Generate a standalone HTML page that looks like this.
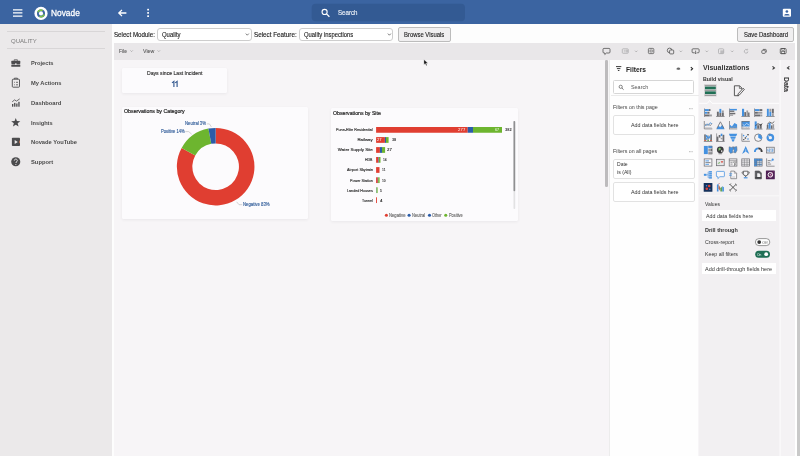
<!DOCTYPE html>
<html><head><meta charset="utf-8">
<style>
*{box-sizing:border-box;margin:0;padding:0}
html,body{width:800px;height:456px;overflow:hidden;background:#f7f5f7;font-family:"Liberation Sans",sans-serif;}
.a{position:absolute}
.t{position:absolute;white-space:nowrap;line-height:1;color:#333}
#hdr{left:0;top:0;width:800px;height:24.8px;background:#3b64a1}
#side{left:0;top:24.3px;width:111.8px;height:432px;background:#ebe9ea}
#sideline{left:111.8px;top:24.3px;width:2px;height:432px;background:#fdfdfd}
#tb1{left:113px;top:24.3px;width:682px;height:18.6px;background:#fdfdfd}
#tb2{left:114px;top:42.8px;width:681px;height:16.8px;background:#e9e7e9}
#canvas{left:113.5px;top:59.6px;width:496px;height:397px;background:#f7f5f7}
#filters{left:609.2px;top:59.6px;width:89.3px;height:397px;background:#fefefe;border-left:1px solid #ececec}
#viz{left:699.2px;top:59.6px;width:80.2px;height:397px;background:#f2f0f2}
#data{left:779.6px;top:59.6px;width:15px;height:397px;background:#f4f2f4;border-left:1px solid #f9f8f9}
#rwhite{left:794.5px;top:24.3px;width:2.5px;height:432px;background:#fff}
#rgray{left:797px;top:24.3px;width:3px;height:432px;background:#c9c9c9}
.card{position:absolute;background:#fcfbfd;border-radius:1.5px;box-shadow:0 1px 3px rgba(60,50,70,.07)}
.sel{position:absolute;background:#fff;border:1px solid #cdcdcd;border-radius:3px}
.btn{position:absolute;background:#f0eff0;border:1px solid #bcbcbc;border-radius:2px}
.box{position:absolute;background:#fff;border:1px solid #e2e2e2;border-radius:2px}
.wbox{position:absolute;background:#fff}
</style></head><body>
<div class="a" id="hdr"></div>
<div class="a" id="side"></div>
<div class="a" id="sideline"></div>
<div class="a" id="tb1"></div>
<div class="a" id="tb2"></div>
<div class="a" id="canvas"></div>
<div class="a" id="filters"></div>
<div class="a" id="viz"></div>
<div class="a" id="data"></div>
<div class="a" id="rwhite"></div>
<div class="a" id="rgray"></div>

<div id="soft" style="position:absolute;left:0;top:0;width:800px;height:456px;filter:blur(0.4px)">
<!-- sidebar separators -->
<div class="a" style="left:7px;top:30.8px;width:98px;height:1px;background:#d8d6d7"></div>
<div class="a" style="left:7px;top:47.8px;width:98px;height:1px;background:#d8d6d7"></div>

<!-- toolbar 1 controls -->
<div class="sel" style="left:157.3px;top:27.6px;width:94.4px;height:13.6px"></div>
<div class="sel" style="left:298.7px;top:27.6px;width:94.5px;height:13.6px"></div>
<div class="btn" style="left:397.5px;top:26.8px;width:53.2px;height:15.2px"></div>
<div class="btn" style="left:737px;top:26.8px;width:57px;height:15px"></div>

<!-- cards -->
<div class="card" style="left:122px;top:67.6px;width:105px;height:25.8px"></div>
<div class="card" style="left:122px;top:107.2px;width:186.2px;height:112.3px"></div>
<div class="card" style="left:331.3px;top:108.3px;width:186.4px;height:112.8px"></div>

<!-- canvas scrollbar -->
<div class="a" style="left:605.2px;top:60px;width:2.6px;height:126.8px;background:#bdbbbd;border-radius:1.3px"></div>

<!-- filters panel boxes -->
<div class="box" style="left:613px;top:80.3px;width:80.8px;height:13.3px;border-color:#d6d6d6;border-radius:1.5px"></div>
<div class="a" style="left:610.6px;top:95.3px;width:88px;height:1px;background:#ebebeb"></div>
<div class="box" style="left:613px;top:115px;width:82px;height:20.4px"></div>
<div class="box" style="left:613px;top:158.5px;width:82px;height:20.5px"></div>
<div class="box" style="left:613px;top:181.9px;width:82px;height:19.8px"></div>

<!-- viz panel boxes -->
<div class="wbox" style="left:701.9px;top:209.5px;width:74.3px;height:11.3px"></div>
<div class="wbox" style="left:701.9px;top:263.2px;width:74.3px;height:10.6px"></div>

<svg class="a" style="left:0;top:0" width="800" height="456" viewBox="0 0 800 456">
<g stroke="#fff" stroke-width="1.25"><path d="M13 9.9h9.4M13 12.95h9.4M13 16h9.4"/></g>
<circle cx="41" cy="13.4" r="6.6" fill="#fff"/>
<circle cx="41" cy="13.4" r="4.0" fill="#3b64a1"/>
<path d="M37.9 12.3 A3.1 3.1 0 0 1 42.6 10.7" stroke="#7cc344" stroke-width="1.6" fill="none"/>
<path d="M44.1 14.5 A3.1 3.1 0 0 1 39.4 16.1" stroke="#7cc344" stroke-width="1.6" fill="none"/>
<circle cx="41" cy="13.4" r="2.1" fill="#fff"/>
<path d="M126.4 13h-7.4M122 9.9l-3.2 3.1 3.2 3.1" stroke="#fff" stroke-width="1.3" fill="none"/>
<rect x="147.2" y="8.7" width="1.8" height="1.8" rx="0.5" fill="#fff"/>
<rect x="147.2" y="12.0" width="1.8" height="1.8" rx="0.5" fill="#fff"/>
<rect x="147.2" y="15.299999999999999" width="1.8" height="1.8" rx="0.5" fill="#fff"/>
<rect x="311.7" y="3.8" width="153.3" height="17.4" rx="4" fill="#335a93"/>
<circle cx="324.6" cy="11.9" r="2.55" stroke="#fff" stroke-width="1.1" fill="none"/><path d="M326.5 13.9l2.9 2.9" stroke="#fff" stroke-width="1.3"/>
<rect x="782.8" y="8.8" width="8.2" height="8" rx="1" fill="#fff"/><circle cx="786.9" cy="11.5" r="1.35" fill="#3b64a1"/><path d="M784.2 15.5c0-1.9 5.4-1.9 5.4 0z" fill="#3b64a1"/>
<g fill="#4b4b4d"><rect x="11.3" y="60.8" width="9" height="3.1" rx="0.6"/><rect x="11.3" y="64.5" width="9" height="2.2" rx="0.5"/><path d="M14.2 60.8v-1h3.2v1" fill="none" stroke="#4b4b4d" stroke-width="0.8"/></g>
<rect x="15" y="63.4" width="1.6" height="1.4" fill="#ebe9ea"/>
<g fill="none" stroke="#4b4b4d" stroke-width="0.9"><rect x="12.3" y="79.2" width="7.2" height="8" rx="0.8"/><path d="M14.4 79.2v-1h3v1"/><path d="M14 82.3h0.8M16 82.3h2M14 84.8h0.8M16 84.8h2" stroke-width="0.8"/></g>
<g fill="#4b4b4d"><rect x="12" y="104" width="1.3" height="2.7"/><rect x="14.1" y="102.9" width="1.3" height="3.8"/><rect x="16.2" y="103.5" width="1.3" height="3.2"/><rect x="18.3" y="101.8" width="1.3" height="4.9"/></g><path d="M12.2 101.8l2.4-1.9 1.9 1.2 3.2-2.2" stroke="#4b4b4d" stroke-width="0.8" fill="none"/>
<polygon points="15.75,117.90 16.93,121.08 20.32,121.22 17.65,123.32 18.57,126.58 15.75,124.70 12.93,126.58 13.85,123.32 11.18,121.22 14.57,121.08" fill="#4b4b4d"/>
<rect x="11.9" y="137.8" width="8.1" height="8.2" rx="0.8" fill="#4b4b4d"/><path d="M14.7 139.9l3.1 2-3.1 2z" fill="#ebe9ea"/><rect x="19.3" y="140.6" width="0.7" height="2.6" fill="#d9825a"/>
<circle cx="15.75" cy="161.75" r="4.55" fill="#4b4b4d"/>
<path d="M14.3 160.6c0-2 3-2 3 0c0 1.1-1.45 1.2-1.45 2.4" stroke="#ebe9ea" stroke-width="0.95" fill="none"/><circle cx="15.85" cy="164.5" r="0.6" fill="#ebe9ea"/>
<g stroke="#444" stroke-width="0.7" fill="none"><path d="M245.8 33.6l1.5 1.6 1.5-1.6"/><path d="M387.9 33.6l1.5 1.6 1.5-1.6"/></g>
<g stroke="#888" stroke-width="0.55" fill="none"><path d="M130.4 50.4l1.2 1.2 1.2-1.2"/><path d="M157.6 50.4l1.2 1.2 1.2-1.2"/></g>
<path d="M604 48.4h5a1 1 0 0 1 1 1v2.6a1 1 0 0 1-1 1h-2.6l-1.6 1.5v-1.5h-0.8a1 1 0 0 1-1-1v-2.6a1 1 0 0 1 1-1z" fill="none" stroke="#4a4a4a" stroke-width="0.75"/>
<rect x="622.3" y="48.8" width="6" height="4.5" rx="0.8" fill="none" stroke="#aaa9ab" stroke-width="0.75"/><path d="M623.8 50.3h2M623.8 51.8h2" stroke="#aaa9ab" stroke-width="0.6"/><rect x="626.4" y="49.6" width="1.2" height="2.9" fill="#aaa9ab"/>
<rect x="648.4" y="48.4" width="5.4" height="5.2" rx="0.9" fill="none" stroke="#5a5a5a" stroke-width="0.8"/><rect x="650" y="50" width="2.2" height="2" fill="none" stroke="#5a5a5a" stroke-width="0.6"/>
<circle cx="669.6" cy="50.4" r="2.3" fill="none" stroke="#4a4a4a" stroke-width="0.75"/><rect x="669.6" y="50" width="4.1" height="3.9" rx="0.8" fill="#e9e7e9" stroke="#4a4a4a" stroke-width="0.75"/>
<path d="M693 48.8h5.2a0.9 0.9 0 0 1 .9.9v2.2a0.9 0.9 0 0 1-.9.9h-1M694.4 52.8h-1.4a0.9 0.9 0 0 1-.9-.9v-2.2a0.9 0.9 0 0 1 .9-.9" fill="none" stroke="#4a4a4a" stroke-width="0.75"/><path d="M695.6 50.6v3M694.4 52.6l1.2 1.2 1.2-1.2" fill="none" stroke="#4a4a4a" stroke-width="0.7"/>
<rect x="718.5" y="48.8" width="5.2" height="4.8" rx="0.9" fill="none" stroke="#aaa9ab" stroke-width="0.75"/><rect x="720.3" y="50.4" width="3.4" height="3.2" fill="#aaa9ab" opacity="0.7"/>
<path d="M747.3 50a1.8 1.8 0 1 0 .6 1.5" fill="none" stroke="#aaa9ab" stroke-width="0.75"/><path d="M746.4 49.9h1.2v-1.1" fill="none" stroke="#aaa9ab" stroke-width="0.6"/>
<rect x="761.8" y="50.2" width="3.5" height="3.2" rx="0.8" fill="none" stroke="#4a4a4a" stroke-width="0.75"/><path d="M763 49.4h2.5a0.8 0.8 0 0 1 .8.8v2.2" fill="none" stroke="#4a4a4a" stroke-width="0.75"/>
<rect x="780.3" y="48.5" width="5.8" height="5.2" rx="0.9" fill="none" stroke="#4a4a4a" stroke-width="0.8"/><rect x="781.8" y="48.6" width="2.8" height="1.6" fill="none" stroke="#4a4a4a" stroke-width="0.6"/><rect x="781.7" y="51.5" width="3" height="2.2" fill="none" stroke="#4a4a4a" stroke-width="0.6"/>
<g stroke="#8a8a8a" stroke-width="0.55" fill="none"><path d="M635 50.7l1.2 1.2 1.2-1.2"/><path d="M679.6 50.7l1.2 1.2 1.2-1.2"/><path d="M705.6 50.7l1.2 1.2 1.2-1.2"/><path d="M731 50.7l1.2 1.2 1.2-1.2"/></g>
<path d="M215.65 127.90A38.8 38.8 0 1 1 181.65 148.01L195.23 155.48A23.3 23.3 0 1 0 215.65 143.40Z" fill="#e03e31"/>
<path d="M181.65 148.01A38.8 38.8 0 0 1 208.38 128.59L211.28 143.81A23.3 23.3 0 0 0 195.23 155.48Z" fill="#6db52f"/>
<path d="M208.38 128.59A38.8 38.8 0 0 1 215.65 127.90L215.65 143.40A23.3 23.3 0 0 0 211.28 143.81Z" fill="#2b5ca8"/>
<g stroke="#a8a8a8" stroke-width="0.5" fill="none"><path d="M206.8 123.9h2.6l2 3"/><path d="M185.3 131.6h3.4l3 2.6"/><path d="M236.6 201.8l2.4 2.9h3.2"/></g>
<rect x="376.10" y="127.0" width="91.65" height="5.75" fill="#e03e31"/>
<rect x="467.75" y="127.0" width="5.25" height="5.75" fill="#2b5ca8"/>
<rect x="473.00" y="127.0" width="29.00" height="5.75" fill="#6db52f"/>
<rect x="376.10" y="137.1" width="8.80" height="5.75" fill="#e03e31"/>
<rect x="384.90" y="137.1" width="1.10" height="5.75" fill="#2b5ca8"/>
<rect x="386.00" y="137.1" width="2.60" height="5.75" fill="#6db52f"/>
<rect x="376.10" y="147.1" width="3.80" height="5.75" fill="#e03e31"/>
<rect x="379.90" y="147.1" width="2.10" height="5.75" fill="#2b5ca8"/>
<rect x="382.00" y="147.1" width="3.10" height="5.75" fill="#6db52f"/>
<rect x="376.10" y="157.0" width="2.40" height="5.75" fill="#e03e31"/>
<rect x="378.50" y="157.0" width="0.50" height="5.75" fill="#2b5ca8"/>
<rect x="379.00" y="157.0" width="1.50" height="5.75" fill="#6db52f"/>
<rect x="376.10" y="167.1" width="3.40" height="5.75" fill="#e03e31"/>
<rect x="376.10" y="177.3" width="1.70" height="5.75" fill="#e03e31"/>
<rect x="377.80" y="177.3" width="0.40" height="5.75" fill="#2b5ca8"/>
<rect x="378.20" y="177.3" width="1.40" height="5.75" fill="#6db52f"/>
<rect x="376.10" y="187.3" width="0.40" height="5.75" fill="#2b5ca8"/>
<rect x="376.50" y="187.3" width="1.10" height="5.75" fill="#6db52f"/>
<rect x="376.10" y="197.3" width="0.90" height="5.75" fill="#e03e31"/>
<rect x="513.5" y="121" width="1.7" height="88" rx="0.8" fill="#e2e2e3"/><rect x="513.5" y="121" width="1.7" height="70.3" rx="0.8" fill="#8f8f91"/>
<circle cx="386.4" cy="215.3" r="1.55" fill="#e03e31"/>
<circle cx="409.1" cy="215.3" r="1.55" fill="#2b5ca8"/>
<circle cx="429.5" cy="215.3" r="1.55" fill="#2b5ca8"/>
<circle cx="445.75" cy="215.3" r="1.55" fill="#6db52f"/>
<g stroke="#333" stroke-width="0.95"><path d="M616 66.6h5.3M616.9 68.6h3.5M617.9 70.5h1.5"/></g>
<path d="M676.4 68.6c1-1.5 3-1.5 4 0c-1 1.5-3 1.5-4 0z" fill="#666"/><path d="M676.6 69.5l3.6 0" stroke="#666" stroke-width="0.5"/>
<path d="M690.8 67.1l1.8 1.6-1.8 1.6" stroke="#222" stroke-width="1.05" fill="none"/>
<circle cx="620.7" cy="86.8" r="1.6" stroke="#555" stroke-width="0.7" fill="none"/><path d="M621.9 88l1.7 1.7" stroke="#555" stroke-width="0.8"/>
<path d="M689.2 108.7h3.4" stroke="#888" stroke-width="0.7" stroke-dasharray="0.8 0.5"/>
<path d="M689.2 151.7h3.4" stroke="#888" stroke-width="0.7" stroke-dasharray="0.8 0.5"/>
<path d="M772.5 66.4l1.9 1.5-1.9 1.5" stroke="#333" stroke-width="1.15" fill="none"/>
<path d="M789.4 66.4l-1.9 1.5 1.9 1.5" stroke="#333" stroke-width="1.15" fill="none"/>
<rect x="704" y="84" width="12.8" height="12.6" rx="0.6" fill="#d7d5d7"/>
<rect x="704.8" y="85.2" width="11.2" height="0.6" fill="#777"/><rect x="704.8" y="90" width="11.2" height="0.6" fill="#777"/><rect x="704.8" y="95" width="11.2" height="0.6" fill="#777"/>
<rect x="705" y="86.6" width="10.8" height="2.7" fill="#1f6f55"/><rect x="705" y="91.4" width="10.8" height="2.7" fill="#1f6f55"/>
<path d="M734.4 85.8h5.2l2.4 2.4v1.6M734.4 85.8v9.9h4.4" fill="none" stroke="#333" stroke-width="0.8"/><path d="M739.4 86v2.4h2.4" fill="none" stroke="#333" stroke-width="0.6"/><path d="M744.4 89.4l-5 5.6-1.6.6.3-1.7 5-5.6z" fill="#f2f0f2" stroke="#333" stroke-width="0.75"/>
<path d="M699.2 103.3h8.2l2.3-2.9 2.3 2.9h67.2" stroke="#fff" stroke-width="0.9" fill="none"/>
<path d="M699.2 195.9h80" stroke="#fbfafb" stroke-width="0.9"/>
<rect x="755.4" y="238.6" width="14.4" height="7" rx="3.5" fill="#fff" stroke="#555" stroke-width="0.6"/><circle cx="759.2" cy="242.1" r="1.9" fill="#333"/>
<rect x="755.2" y="250.7" width="14.8" height="7" rx="3.5" fill="#1f6f55"/><circle cx="766.2" cy="254.2" r="1.9" fill="#fff"/>
<path d="M423.9 59.5v5.2l1.3-1.2 1 2.2 0.9-.4-1-2.1h1.8z" fill="#111" stroke="#fff" stroke-width="0.35"/>
<path d="M172 82.9l1.9-1.5v5.6M175.2 82.9l1.9-1.5v5.6" stroke="#33588f" stroke-width="1.15" fill="none" stroke-linejoin="miter"/>
<g transform="translate(703.8,108.5)"><rect x="0.2" y="0" width="0.7" height="8.4" fill="#6c6c70" /><rect x="0.9" y="0.6" width="4.2" height="1.9" fill="#4491e0" /><rect x="5.1" y="0.6" width="1.6" height="1.9" fill="#6c6c70" /><rect x="0.9" y="3.3" width="2.6" height="1.9" fill="#4491e0" /><rect x="3.5" y="3.3" width="2.2" height="1.9" fill="#6c6c70" /><rect x="0.9" y="6" width="5" height="1.9" fill="#6c6c70" /><rect x="5.9" y="6" width="2.2" height="1.9" fill="#9c9ca0" /></g>
<g transform="translate(716.1,108.5)"><rect x="0" y="7.7" width="8.5" height="0.7" fill="#6c6c70" /><rect x="0.8" y="3.2" width="1.9" height="4.5" fill="#6c6c70" /><rect x="3.3" y="0.4" width="1.9" height="4" fill="#4491e0" /><rect x="3.3" y="4.4" width="1.9" height="3.3" fill="#6c6c70" /><rect x="5.8" y="2" width="1.9" height="2.4" fill="#9c9ca0" /><rect x="5.8" y="4.4" width="1.9" height="3.3" fill="#6c6c70" /></g>
<g transform="translate(728.8,108.5)"><rect x="0.2" y="0" width="0.7" height="8.4" fill="#6c6c70" /><rect x="0.9" y="0.4" width="7.2" height="1.5" fill="#4491e0" /><rect x="0.9" y="2.1" width="4.6" height="1.3" fill="#6c6c70" /><rect x="0.9" y="4.3" width="5.6" height="1.5" fill="#6c6c70" /><rect x="0.9" y="6" width="3.4" height="1.3" fill="#9c9ca0" /></g>
<g transform="translate(741.4,108.5)"><rect x="0" y="7.7" width="8.5" height="0.7" fill="#6c6c70" /><rect x="0.6" y="0.3" width="2.1" height="7.4" fill="#4491e0" /><rect x="2.9" y="3.6" width="1.7" height="4.1" fill="#6c6c70" /><rect x="5" y="2" width="1.7" height="5.7" fill="#9c9ca0" /><rect x="6.7" y="4" width="1.4" height="3.7" fill="#6c6c70" /></g>
<g transform="translate(754.0,108.5)"><rect x="0.2" y="0" width="0.7" height="8.4" fill="#6c6c70" /><rect x="0.9" y="0.6" width="4.6" height="1.9" fill="#4491e0" /><rect x="5.5" y="0.6" width="2.8" height="1.9" fill="#6c6c70" /><rect x="0.9" y="3.3" width="3" height="1.9" fill="#6c6c70" /><rect x="3.9" y="3.3" width="4.4" height="1.9" fill="#9c9ca0" /><rect x="0.9" y="6" width="5.4" height="1.9" fill="#6c6c70" /><rect x="6.3" y="6" width="2" height="1.9" fill="#9c9ca0" /></g>
<g transform="translate(766.1,108.5)"><rect x="0" y="7.7" width="8.5" height="0.7" fill="#6c6c70" /><rect x="0.8" y="0.3" width="1.9" height="7.4" fill="#4491e0" /><rect x="3.3" y="0.3" width="1.9" height="3" fill="#9c9ca0" /><rect x="3.3" y="3.3" width="1.9" height="4.4" fill="#4491e0" /><rect x="5.8" y="0.3" width="1.9" height="4.6" fill="#6c6c70" /><rect x="5.8" y="4.9" width="1.9" height="2.8" fill="#9c9ca0" /></g>
<g transform="translate(703.8,121.0)"><path d="M0.5 0v7.9h8" fill="none" stroke="#6c6c70" stroke-width="0.7" /><path d="M1.2 5.2l1.9-2.4 1.7 1.5 1.6-2.6 1.8 1.2" fill="none" stroke="#4491e0" stroke-width="0.8" /><path d="M1.2 3l1.9 1.6 1.7-1.5 1.6 1.8 1.8-2.4" fill="none" stroke="#6c6c70" stroke-width="0.6" /><path d="M1.2 6.8h6.8" fill="none" stroke="#9c9ca0" stroke-width="0.5" /></g>
<g transform="translate(716.1,121.0)"><path d="M0.2 8.3l2.3-3.6 1.6 1.6 2-2.6 2.3 4.6z" fill="#4491e0" stroke="none" stroke-width="0.7" /><path d="M0.8 7.4l3.5-6.6 3.6 6.6" fill="none" stroke="#6c6c70" stroke-width="0.8" /></g>
<g transform="translate(728.8,121.0)"><rect x="0.2" y="0" width="0.7" height="8.4" fill="#6c6c70" /><path d="M0.9 3.4l2.2 2 2.6-3.4 2.6 1.4v3.6h-7.4z" fill="#4491e0" stroke="none" stroke-width="0.7" /><path d="M0.9 7.9h7.5" fill="none" stroke="#6c6c70" stroke-width="0.7" /><path d="M0.9 6.2l2.4.8 2.4-1.4 2.6 1" fill="none" stroke="#9c9ca0" stroke-width="0.6" /></g>
<g transform="translate(741.4,121.0)"><rect x="0.2" y="0.2" width="8.1" height="5.3" fill="#4491e0" /><path d="M0.6 0.5h7.6" fill="none" stroke="#6c6c70" stroke-width="0.7" /><path d="M0.9 3l2 1.6 2.2-2.2 2.8 1.8" fill="none" stroke="#dfeaf8" stroke-width="0.7" /><rect x="0.2" y="0" width="0.7" height="8.4" fill="#6c6c70" /><path d="M0.9 7.9h7.5" fill="none" stroke="#6c6c70" stroke-width="0.7" /><path d="M1 6.6l2.6-.6 2.4.8 2.2-.6" fill="none" stroke="#9c9ca0" stroke-width="0.5" /></g>
<g transform="translate(754.0,121.0)"><rect x="0" y="7.7" width="8.5" height="0.7" fill="#6c6c70" /><rect x="0.7" y="0.4" width="2" height="7.3" fill="#4491e0" /><rect x="3.2" y="4.2" width="2" height="3.5" fill="#6c6c70" /><rect x="5.7" y="3" width="2" height="4.7" fill="#6c6c70" /><path d="M1.4 4.6l2.8-1.8 2.6 1.6 1.4-2" fill="none" stroke="#333" stroke-width="0.7" /><rect x="3.2" y="2" width="2" height="2.2" fill="#9c9ca0" /></g>
<g transform="translate(766.1,121.0)"><rect x="0" y="7.7" width="8.5" height="0.7" fill="#6c6c70" /><rect x="0.7" y="3.8" width="1.6" height="3.9" fill="#6c6c70" /><rect x="2.5" y="2" width="2" height="5.7" fill="#4491e0" /><rect x="4.9" y="4.4" width="1.5" height="3.3" fill="#6c6c70" /><rect x="6.5" y="3.2" width="1.5" height="4.5" fill="#9c9ca0" /><path d="M1 3.4l2.6-2.4 2.4 1.4 2.2-1.8" fill="none" stroke="#333" stroke-width="0.7" /></g>
<g transform="translate(703.8,133.4)"><rect x="0" y="7.7" width="8.5" height="0.7" fill="#6c6c70" /><rect x="0.4" y="1" width="1.6" height="6" fill="#6c6c70" /><rect x="6.5" y="1" width="1.6" height="6" fill="#6c6c70" /><rect x="3.4" y="2" width="1.6" height="5" fill="#9c9ca0" /><path d="M2 1.4c1.4 0 1.4 2 3 2.2v2c-1.6-.2-1.6-2-3-2z" fill="#4491e0" stroke="none" stroke-width="0.7" /><path d="M5 3.4c.8 0 .8-1.6 1.5-1.8v2.4c-.7.2-.7 1.4-1.5 1.4z" fill="#4491e0" stroke="none" stroke-width="0.7" /><path d="M2 5.2c.7 0 .7-1.4 1.4-1.6v2.2c-.7.2-.7 1.2-1.4 1.2z" fill="#4491e0" stroke="none" stroke-width="0.7" /><rect x="0.4" y="6.6" width="2" height="1" fill="#c9674f" /><rect x="3.6" y="6.6" width="1.6" height="1" fill="#6fae5a" /><rect x="6.2" y="6.6" width="2" height="1" fill="#c9674f" /></g>
<g transform="translate(716.1,133.4)"><rect x="0" y="7.7" width="8.5" height="0.7" fill="#6c6c70" /><rect x="0.6" y="3.2" width="1.7" height="4.5" fill="#6c6c70" /><rect x="2.6" y="1.6" width="1.7" height="2.6" fill="#6c6c70" /><rect x="4.6" y="0.3" width="1.7" height="2.4" fill="#4491e0" /><rect x="4.6" y="4.4" width="1.7" height="1.5" fill="#9c9ca0" /><rect x="6.5" y="1.4" width="1.7" height="6.3" fill="#6c6c70" /><path d="M0.5 0v8" fill="none" stroke="#6c6c70" stroke-width="0.6" /></g>
<g transform="translate(728.8,133.4)"><path d="M0.1 0.4h8.3l-.9 2.2h-6.5zM1.3 3.1h5.9l-.9 2.2h-4.1zM2.6 5.8h3.3l-.8 2.3h-1.7z" fill="#4491e0" stroke="none" stroke-width="0.7" /></g>
<g transform="translate(741.4,133.4)"><path d="M0.5 0v7.9h8" fill="none" stroke="#6c6c70" stroke-width="0.7" /><circle cx="2.2" cy="2.2" r="0.8" fill="#4491e0"/><circle cx="4" cy="4.6" r="0.9" fill="#6c6c70"/><circle cx="6.6" cy="1.4" r="0.8" fill="#333"/><circle cx="6.6" cy="5.6" r="0.8" fill="#4491e0"/><circle cx="2.4" cy="6.2" r="0.7" fill="#333"/><circle cx="5" cy="3" r="0.6" fill="#4491e0"/></g>
<g transform="translate(754.0,133.4)"><circle cx="4.25" cy="4.3" r="3.7" fill="#f4f3f5" stroke="#6c6c70" stroke-width="0.8"/><path d="M4.25 4.3v-3.7a3.7 3.7 0 0 1 3.2 5.55z" fill="#4491e0" stroke="none" stroke-width="0.7" /></g>
<g transform="translate(766.1,133.4)"><circle cx="4.25" cy="4.3" r="2.75" fill="none" stroke="#4491e0" stroke-width="2.2"/><path d="M4.25 4.3L1.2 1.6" fill="none" stroke="#f2f0f2" stroke-width="0.8" /><path d="M4.25 0.4a3.9 3.9 0 0 0-3 1.5" fill="none" stroke="#6c6c70" stroke-width="0.7" /></g>
<g transform="translate(703.8,145.8)"><rect x="0.1" y="0.1" width="3.9" height="8.2" fill="#4491e0" /><rect x="4.5" y="0.1" width="3.9" height="2.3" fill="#4491e0" /><rect x="4.5" y="2.9" width="1.7" height="2.4" fill="#9c9ca0" /><rect x="6.6" y="2.9" width="1.8" height="2.4" fill="#6c6c70" /><rect x="4.5" y="5.8" width="3.9" height="2.5" fill="#9c9ca0" /><path d="M4.5 0.3h3.9v8h-3.9" fill="none" stroke="#6c6c70" stroke-width="0.5" /></g>
<g transform="translate(716.1,145.8)"><circle cx="4.2" cy="4" r="3.4" fill="#3c3c3e"/><path d="M2.6 2.2c1.2-.8 2.6.2 2 1.4c-.6 1-1.8.4-2.2 1.6z" fill="#7cc36a"/><path d="M5 4.6c1-.4 1.8.4 1.2 1.4c-.6.8-1.4.4-1.2-1.4z" fill="#e8e8e8"/><rect x="2.4" y="7.6" width="3.6" height="0.8" fill="#6c6c70" /></g>
<g transform="translate(728.8,145.8)"><path d="M0.3 1l2.6.6 1.6-.8.6 2.4-1.4 1.6.4 2-2.4.8-1.6-2.2z" fill="#4491e0" stroke="none" stroke-width="0.7" /><path d="M4.6 1.4l3.4-.6.3 3.6-1.5 2.8-2-.6.6-2.4z" fill="#4491e0" stroke="none" stroke-width="0.7" /><path d="M0.3 1l2.6.6 1.6-.8.6 2.4-1.4 1.6.4 2-2.4.8-1.6-2.2zM4.6 1.4l3.4-.6.3 3.6-1.5 2.8-2-.6.6-2.4z" fill="none" stroke="#6c6c70" stroke-width="0.45" /></g>
<g transform="translate(741.4,145.8)"><path d="M4.3 0.2l3.6 7.9-3.6-2.3-3.6 2.3z" fill="#4491e0" stroke="none" stroke-width="0.7" /><path d="M4.3 3.4v3" fill="none" stroke="#f2f0f2" stroke-width="0.5" /></g>
<g transform="translate(754.0,145.8)"><path d="M0.9 6.2a3.4 3.4 0 0 1 3.4-3.6" fill="none" stroke="#4491e0" stroke-width="1.9" /><path d="M4.3 2.6a3.4 3.4 0 0 1 3.4 3.6" fill="none" stroke="#3c3c3e" stroke-width="1.9" /><path d="M4.2 6.2l2.2-2.4" fill="none" stroke="#f2f0f2" stroke-width="0.6" /></g>
<g transform="translate(766.1,145.8)"><rect x="0.35" y="1.4" width="7.8" height="5.8" fill="#e3e3e6" stroke="#6c6c70" stroke-width="0.7"/><path d="M1.6 3.2v2.4M2.8 3.2h1.2v1.2h-1.2v1.2h1.4M5.2 3.2h1.5v2.4h-1.5M5.4 4.4h1.3" fill="none" stroke="#4491e0" stroke-width="0.55" /></g>
<g transform="translate(703.8,158.3)"><rect x="0.4" y="0.6" width="7.7" height="7.2" fill="#f7f6f8" stroke="#6c6c70" stroke-width="0.75"/><path d="M1.6 2.6h3.6M1.6 6h3.6" fill="none" stroke="#4491e0" stroke-width="0.9" /><path d="M1.6 4.3h5.2" fill="none" stroke="#6c6c70" stroke-width="0.8" /></g>
<g transform="translate(716.1,158.3)"><rect x="0.4" y="1" width="7.7" height="6.4" fill="#e6e6e9" stroke="#6c6c70" stroke-width="0.75"/><path d="M1.4 5.6l1.6-2 1.2 1.2z" fill="#6fae5a" stroke="none" stroke-width="0.7" /><path d="M4.6 3h2.6l-1.3 2z" fill="#d9453a" stroke="none" stroke-width="0.7" /></g>
<g transform="translate(728.8,158.3)"><rect x="0.4" y="0.6" width="7.7" height="7.2" fill="#f7f6f8" stroke="#6c6c70" stroke-width="0.75"/><path d="M0.4 2.4h7.7" fill="none" stroke="#6c6c70" stroke-width="0.6" /><path d="M1.6 4h2.2M1.6 5.8h2.2" fill="none" stroke="#6c6c70" stroke-width="0.7" /><path d="M4.6 3.6h3l-1.1 1.5v1.7l-.8.5v-2.2z" fill="#f7f6f8" stroke="#444" stroke-width="0.5" /></g>
<g transform="translate(741.4,158.3)"><rect x="0.4" y="0.6" width="7.7" height="7.2" fill="#f7f6f8" stroke="#6c6c70" stroke-width="0.75"/><path d="M0.4 2.6h7.7M0.4 4.4h7.7M0.4 6.1h7.7M3 0.6v7.2M5.6 0.6v7.2" fill="none" stroke="#6c6c70" stroke-width="0.5" /></g>
<g transform="translate(754.0,158.3)"><rect x="0.4" y="0.6" width="7.7" height="7.2" fill="#f7f6f8" stroke="#6c6c70" stroke-width="0.75"/><rect x="0.4" y="0.6" width="7.7" height="2" fill="#4491e0" /><rect x="0.4" y="0.6" width="2.6" height="7.2" fill="#4491e0" /><rect x="3.4" y="3.2" width="4.4" height="1.3" fill="#4491e0" opacity="0.55"/><rect x="3.4" y="5.4" width="4.4" height="1.6" fill="#4491e0" opacity="0.8"/><path d="M0.4 2.6h7.7M0.4 4.4h7.7M0.4 6.1h7.7M3 0.6v7.2M5.6 0.6v7.2" fill="none" stroke="#6c6c70" stroke-width="0.45" /></g>
<g transform="translate(766.1,158.3)"><path d="M0.5 0v7.9h8" fill="none" stroke="#6c6c70" stroke-width="0.7" /><path d="M1.6 2.2h3M1.6 4h2.2M1.6 5.8h3.4" fill="none" stroke="#6c6c70" stroke-width="0.7" /><circle cx="6.6" cy="1.4" r="1.1" fill="#4491e0"/><path d="M4.6 3.2l1.4-1.2" fill="none" stroke="#4491e0" stroke-width="0.6" /></g>
<g transform="translate(703.8,170.6)"><rect x="0.1" y="3.2" width="2.6" height="2" fill="#4491e0" /><path d="M2.7 4.2h1.6M4.3 1.3v5.9M4.3 1.3h1M4.3 3.3h1M4.3 5.2h1M4.3 7.2h1" fill="none" stroke="#4491e0" stroke-width="0.6" /><rect x="5.3" y="0.5" width="2.8" height="1.5" fill="#4491e0" /><rect x="5.3" y="2.5" width="2.8" height="1.5" fill="#4491e0" /><rect x="5.3" y="4.5" width="2.8" height="1.5" fill="#4491e0" /><rect x="5.3" y="6.5" width="2.8" height="1.5" fill="#4491e0" /></g>
<g transform="translate(716.1,170.6)"><path d="M1 0.8h6.6a.7.7 0 0 1 .7.7v3.9a.7.7 0 0 1-.7.7h-3.8l-2 1.9v-1.9h-.8a.7.7 0 0 1-.7-.7v-3.9a.7.7 0 0 1 .7-.7z" fill="#f7f6f8" stroke="#4491e0" stroke-width="0.75" /></g>
<g transform="translate(728.8,170.6)"><path d="M2 0.5h3.6l2.2 2.2v5.4h-5.8z" fill="#f7f6f8" stroke="#6c6c70" stroke-width="0.7" /><path d="M5.6 0.5v2.2h2.2" fill="none" stroke="#6c6c70" stroke-width="0.5" /><path d="M0.4 3.2h3M0.4 4.8h2.4" fill="none" stroke="#4491e0" stroke-width="0.8" /><path d="M3.4 6.4h3" fill="none" stroke="#9c9ca0" stroke-width="0.5" /></g>
<g transform="translate(741.4,170.6)"><path d="M2 0.6h4.5v2.4a2.25 2.25 0 0 1-4.5 0z" fill="#f7f6f8" stroke="#444" stroke-width="0.75" /><path d="M2 1.4h-1.4c0 1.6.6 2.2 1.6 2.4M6.5 1.4h1.4c0 1.6-.6 2.2-1.6 2.4" fill="none" stroke="#444" stroke-width="0.6" /><path d="M4.25 5.2v1.4" fill="none" stroke="#444" stroke-width="0.8" /><rect x="2.4" y="6.6" width="3.7" height="1.2" fill="#4491e0" /></g>
<g transform="translate(754.0,170.6)"><path d="M1.2 0.4h4.2l2 2v5.9h-6.2z" fill="#5c5d61" stroke="#4a4a4d" stroke-width="0.6" /><path d="M3.2 2.6h2.2l1 1.6v2.2h-3.2z" fill="#f2f1f3" stroke="none" stroke-width="0.7" /><path d="M1.2 7h6.2" fill="none" stroke="#3a3a3c" stroke-width="0.8" /></g>
<g transform="translate(766.1,170.6)"><rect x="-0.2" y="-0.2" width="8.9" height="8.9" fill="#4d1f54" rx="0.5"/><circle cx="4.25" cy="4.2" r="2.3" fill="none" stroke="#fff" stroke-width="1"/><path d="M4.25 1.9l2 2.3-2 2.3" fill="none" stroke="#e7a3c6" stroke-width="0.7" /><circle cx="4.25" cy="4.2" r="0.8" fill="#e7a3c6"/><path d="M1.2 7.4l1.2-1.2M7.3 1l-1.2 1.2" fill="none" stroke="#e06a9a" stroke-width="0.5" /></g>
<g transform="translate(703.8,183.2)"><rect x="-0.1" y="-0.1" width="8.7" height="8.7" fill="#14305a" rx="0.4"/><circle cx="5.4" cy="2.8" r="1.3" fill="#e0453a"/><circle cx="3" cy="5.6" r="1.3" fill="#e0453a"/><circle cx="2.8" cy="2.6" r="0.8" fill="#3f8ee0"/><circle cx="6" cy="6" r="0.8" fill="#3f8ee0"/></g>
<g transform="translate(716.1,183.2)"><path d="M0.8 8.3v-6.4l1.6-1.6v8" fill="#4491e0" stroke="none" stroke-width="0.7" /><path d="M2.4 1.2l2 3.6v3.5l-2-3z" fill="#b86a4e" stroke="none" stroke-width="0.7" /><path d="M4.4 5l1.8-2v5.3h-1.8z" fill="#5aa85a" stroke="none" stroke-width="0.7" /><path d="M6.2 3l1.6 1v4.3h-1.6z" fill="#4491e0" stroke="none" stroke-width="0.7" /><path d="M2.6 0.9l.8-.9" fill="none" stroke="#d9453a" stroke-width="0.7" /></g>
<g transform="translate(728.8,183.2)"><path d="M1.2 1.2l6 6M7.2 1.2l-6 6" fill="none" stroke="#444" stroke-width="0.9" /><path d="M0.6 1.8l1.4-1.4M6.4 0.6l1.6 1.6M0.6 6.6l1.4 1.4M6.6 8l1.4-1.4" fill="none" stroke="#444" stroke-width="0.9" /></g>
</svg>
<div class="t" style="top:8.00px;font-size:9.8px;color:#fff;-webkit-text-stroke:0.3px #fff;left:50.70px;transform:scaleX(0.8525);transform-origin:0 0;">Novade</div>
<div class="t" style="top:10.00px;font-size:6.3px;color:#f4f7fb;-webkit-text-stroke:0.1px #f4f7fb;left:337.50px;transform:scaleX(0.9773);transform-origin:0 0;">Search</div>
<div class="t" style="top:38.00px;font-size:6.2px;color:#7a7a7a;left:11.20px;transform:scaleX(0.9742);transform-origin:0 0;">QUALITY</div>
<div class="t" style="top:60.00px;font-size:6.1px;color:#4a4a4a;font-weight:bold;left:30.60px;transform:scaleX(0.9351);transform-origin:0 0;">Projects</div>
<div class="t" style="top:80.00px;font-size:6.1px;color:#4a4a4a;font-weight:bold;left:30.60px;transform:scaleX(0.9417);transform-origin:0 0;">My Actions</div>
<div class="t" style="top:100.00px;font-size:6.1px;color:#4a4a4a;font-weight:bold;left:30.60px;transform:scaleX(0.9515);transform-origin:0 0;">Dashboard</div>
<div class="t" style="top:120.00px;font-size:6.1px;color:#4a4a4a;font-weight:bold;left:30.60px;transform:scaleX(0.9262);transform-origin:0 0;">Insights</div>
<div class="t" style="top:139.00px;font-size:6.1px;color:#4a4a4a;font-weight:bold;left:30.60px;transform:scaleX(0.9433);transform-origin:0 0;">Novade YouTube</div>
<div class="t" style="top:159.00px;font-size:6.1px;color:#4a4a4a;font-weight:bold;left:30.60px;transform:scaleX(0.9482);transform-origin:0 0;">Support</div>
<div class="t" style="top:32.00px;font-size:6.9px;color:#1d1d1d;-webkit-text-stroke:0.15px #1d1d1d;left:114.10px;transform:scaleX(0.8971);transform-origin:0 0;">Select Module:</div>
<div class="t" style="top:32.00px;font-size:6.4px;color:#1d1d1d;-webkit-text-stroke:0.12px #1d1d1d;left:162.10px;transform:scaleX(0.9301);transform-origin:0 0;">Quality</div>
<div class="t" style="top:32.00px;font-size:6.9px;color:#1d1d1d;-webkit-text-stroke:0.15px #1d1d1d;left:254.30px;transform:scaleX(0.9137);transform-origin:0 0;">Select Feature:</div>
<div class="t" style="top:32.00px;font-size:6.4px;color:#1d1d1d;-webkit-text-stroke:0.12px #1d1d1d;left:303.75px;transform:scaleX(0.9181);transform-origin:0 0;">Quality inspections</div>
<div class="t" style="top:32.00px;font-size:6.3px;color:#1d1d1d;-webkit-text-stroke:0.12px #1d1d1d;left:404.00px;transform:scaleX(0.9374);transform-origin:0 0;">Browse Visuals</div>
<div class="t" style="top:32.00px;font-size:6.3px;color:#1d1d1d;-webkit-text-stroke:0.12px #1d1d1d;left:743.50px;transform:scaleX(0.9377);transform-origin:0 0;">Save Dashboard</div>
<div class="t" style="top:49.00px;font-size:5.8px;color:#555;-webkit-text-stroke:0.08px #555;left:119.00px;transform:scaleX(0.8455);transform-origin:0 0;">File</div>
<div class="t" style="top:49.00px;font-size:5.8px;color:#555;-webkit-text-stroke:0.08px #555;left:143.10px;transform:scaleX(0.9063);transform-origin:0 0;">View</div>
<div class="t" style="top:71.00px;font-size:5.8px;color:#2b2b2b;-webkit-text-stroke:0.15px #2b2b2b;left:147.00px;transform:scaleX(0.8831);transform-origin:0 0;">Days since Last Incident</div>
<div class="t" style="top:81.00px;font-size:8px;color:transparent;left:171.60px;transform:scaleX(0.7338);transform-origin:0 0;">11</div>
<div class="t" style="top:109.00px;font-size:5.7px;color:#222;-webkit-text-stroke:0.2px #222;left:124.25px;transform:scaleX(0.9237);transform-origin:0 0;">Observations by Category</div>
<div class="t" style="top:122.00px;font-size:4.5px;color:#2a5796;-webkit-text-stroke:0.12px #2a5796;left:185.00px;transform:scaleX(0.9432);transform-origin:0 0;">Neutral 3%</div>
<div class="t" style="top:130.00px;font-size:4.5px;color:#2a5796;-webkit-text-stroke:0.12px #2a5796;left:160.90px;transform:scaleX(0.9071);transform-origin:0 0;">Positive 14%</div>
<div class="t" style="top:203.00px;font-size:4.5px;color:#2a5796;-webkit-text-stroke:0.12px #2a5796;left:243.40px;transform:scaleX(0.9489);transform-origin:0 0;">Negative 83%</div>
<div class="t" style="top:111.00px;font-size:5.7px;color:#222;-webkit-text-stroke:0.2px #222;left:333.25px;transform:scaleX(0.9117);transform-origin:0 0;">Observations by Site</div>
<div class="t" style="top:128.00px;font-size:4.4px;color:#2a2a2a;-webkit-text-stroke:0.14px #2a2a2a;left:336.10px;transform:scaleX(0.8483);transform-origin:0 0;">Pune-Elite Residential</div>
<div class="t" style="top:128.00px;font-size:4.4px;color:#333;font-weight:bold;left:504.50px;transform:scaleX(0.9006);transform-origin:0 0;">382</div>
<div class="t" style="top:138.00px;font-size:4.4px;color:#2a2a2a;-webkit-text-stroke:0.14px #2a2a2a;right:427.25px;">Railway</div>
<div class="t" style="top:138.00px;font-size:4.4px;color:#333;font-weight:bold;left:391.50px;transform:scaleX(0.8690);transform-origin:0 0;">38</div>
<div class="t" style="top:148.00px;font-size:4.4px;color:#2a2a2a;-webkit-text-stroke:0.14px #2a2a2a;right:427.25px;">Water Supply Site</div>
<div class="t" style="top:148.00px;font-size:4.4px;color:#333;font-weight:bold;left:387.10px;">27</div>
<div class="t" style="top:158.00px;font-size:4.4px;color:#2a2a2a;-webkit-text-stroke:0.14px #2a2a2a;left:365.25px;transform:scaleX(0.8081);transform-origin:0 0;">HDB</div>
<div class="t" style="top:158.00px;font-size:4.4px;color:#333;font-weight:bold;left:383.40px;transform:scaleX(0.7565);transform-origin:0 0;">14</div>
<div class="t" style="top:168.00px;font-size:4.4px;color:#2a2a2a;-webkit-text-stroke:0.14px #2a2a2a;left:346.50px;transform:scaleX(0.8745);transform-origin:0 0;">Airport Skytrain</div>
<div class="t" style="top:168.00px;font-size:4.4px;color:#333;font-weight:bold;left:382.00px;transform:scaleX(0.7517);transform-origin:0 0;">11</div>
<div class="t" style="top:179.00px;font-size:4.4px;color:#2a2a2a;-webkit-text-stroke:0.14px #2a2a2a;left:349.90px;transform:scaleX(0.8357);transform-origin:0 0;">Power Station</div>
<div class="t" style="top:179.00px;font-size:4.4px;color:#333;font-weight:bold;left:382.00px;transform:scaleX(0.7668);transform-origin:0 0;">10</div>
<div class="t" style="top:189.00px;font-size:4.4px;color:#2a2a2a;-webkit-text-stroke:0.14px #2a2a2a;left:347.00px;transform:scaleX(0.8370);transform-origin:0 0;">Landed Houses</div>
<div class="t" style="top:189.00px;font-size:4.4px;color:#333;font-weight:bold;left:380.25px;transform:scaleX(0.7541);transform-origin:0 0;">5</div>
<div class="t" style="top:199.00px;font-size:4.4px;color:#2a2a2a;-webkit-text-stroke:0.14px #2a2a2a;left:362.00px;transform:scaleX(0.8104);transform-origin:0 0;">Tunnel</div>
<div class="t" style="top:199.00px;font-size:4.4px;color:#333;font-weight:bold;left:379.90px;">4</div>
<div class="t" style="top:128.00px;font-size:4.2px;color:#fff;left:458.00px;letter-spacing:0.125px;">277</div>
<div class="t" style="top:128.00px;font-size:4.2px;color:#fff;left:495.25px;transform:scaleX(0.8562);transform-origin:0 0;">67</div>
<div class="t" style="top:138.00px;font-size:4.2px;color:#fff;left:377.20px;transform:scaleX(0.9846);transform-origin:0 0;">27</div>
<div class="t" style="top:214.00px;font-size:4.5px;color:#5f5f5f;-webkit-text-stroke:0.1px #5f5f5f;left:389.10px;transform:scaleX(0.9288);transform-origin:0 0;">Negative</div>
<div class="t" style="top:214.00px;font-size:4.5px;color:#5f5f5f;-webkit-text-stroke:0.1px #5f5f5f;left:412.25px;transform:scaleX(0.9059);transform-origin:0 0;">Neutral</div>
<div class="t" style="top:214.00px;font-size:4.5px;color:#5f5f5f;-webkit-text-stroke:0.1px #5f5f5f;left:432.25px;transform:scaleX(0.8566);transform-origin:0 0;">Other</div>
<div class="t" style="top:214.00px;font-size:4.5px;color:#5f5f5f;-webkit-text-stroke:0.1px #5f5f5f;left:448.50px;transform:scaleX(0.8722);transform-origin:0 0;">Positive</div>
<div class="t" style="top:67.00px;font-size:6.9px;color:#222;font-weight:bold;left:625.90px;transform:scaleX(0.9668);transform-origin:0 0;">Filters</div>
<div class="t" style="top:84.00px;font-size:6.0px;color:#555;left:631.25px;transform:scaleX(0.9019);transform-origin:0 0;">Search</div>
<div class="t" style="top:105.00px;font-size:5.6px;color:#444;left:613.00px;transform:scaleX(0.9468);transform-origin:0 0;">Filters on this page</div>
<div class="t" style="top:123.00px;font-size:5.6px;color:#333;left:630.50px;transform:scaleX(0.9545);transform-origin:0 0;">Add data fields here</div>
<div class="t" style="top:149.00px;font-size:5.6px;color:#444;left:613.00px;transform:scaleX(0.9392);transform-origin:0 0;">Filters on all pages</div>
<div class="t" style="top:162.00px;font-size:5.6px;color:#333;left:617.10px;transform:scaleX(0.9004);transform-origin:0 0;">Date</div>
<div class="t" style="top:170.00px;font-size:5.6px;color:#333;left:617.10px;transform:scaleX(0.9262);transform-origin:0 0;">is (All)</div>
<div class="t" style="top:190.00px;font-size:5.6px;color:#333;left:630.50px;transform:scaleX(0.9545);transform-origin:0 0;">Add data fields here</div>
<div class="t" style="top:64.00px;font-size:7.5px;color:#333;font-weight:bold;left:703.15px;transform:scaleX(0.9310);transform-origin:0 0;">Visualizations</div>
<div class="t" style="top:77.00px;font-size:5.4px;color:#333;font-weight:bold;left:703.15px;transform:scaleX(0.9797);transform-origin:0 0;">Build visual</div>
<div class="t" style="top:202.00px;font-size:5.6px;color:#333;left:704.85px;transform:scaleX(0.8950);transform-origin:0 0;">Values</div>
<div class="t" style="top:214.00px;font-size:5.6px;color:#333;left:706.10px;transform:scaleX(0.9464);transform-origin:0 0;">Add data fields here</div>
<div class="t" style="top:228.00px;font-size:5.6px;color:#333;font-weight:bold;left:704.85px;transform:scaleX(0.9758);transform-origin:0 0;">Drill through</div>
<div class="t" style="top:240.00px;font-size:5.6px;color:#333;left:704.85px;transform:scaleX(0.9407);transform-origin:0 0;">Cross-report</div>
<div class="t" style="top:252.00px;font-size:5.6px;color:#333;left:704.85px;transform:scaleX(0.9377);transform-origin:0 0;">Keep all filters</div>
<div class="t" style="top:267.00px;font-size:5.6px;color:#333;left:705.00px;transform:scaleX(0.9794);transform-origin:0 0;">Add drill-through fields here</div>
<div class="t" style="top:242.00px;font-size:3.6px;color:#555;left:762.30px;letter-spacing:0.233px;">Off</div>
<div class="t" style="top:254.00px;font-size:3.6px;color:#fff;left:757.30px;transform:scaleX(0.8964);transform-origin:0 0;">On</div>
<div class="t" style="left:789.4px;top:76.7px;font-size:6.9px;font-weight:bold;color:#333;transform:rotate(90deg);transform-origin:0 0;">Data</div>
</div>
</body></html>
